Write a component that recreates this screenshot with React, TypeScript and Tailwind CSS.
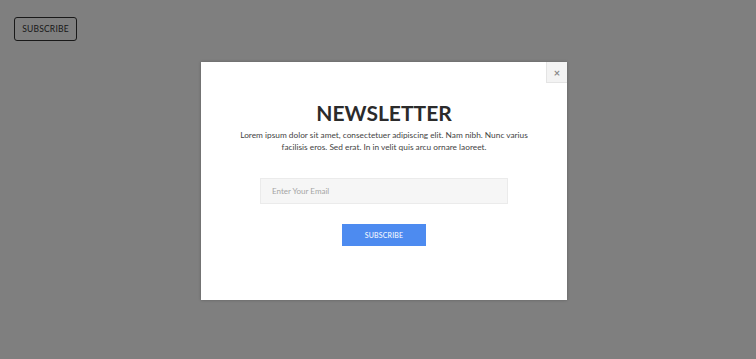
const font = { fontFamily: "Lato, 'Open Sans', sans-serif" };

const App = () => {
  return (
    <div className="relative h-[359px] w-[756px] overflow-hidden bg-white" style={font}>
      <div className="p-[14px]">
        <button className="h-6 w-[63px] rounded-[3px] border border-[#333] text-[8.5px] tracking-[0.2px] text-[#333]">
          SUBSCRIBE
        </button>
      </div>

      <div className="absolute inset-0 flex items-start justify-center bg-black/50 pt-[62px]">
        <div className="relative ml-[12px] h-[238px] w-[366px] bg-white shadow-[0_0_3px_rgba(0,0,0,0.25)]">
          <button className="absolute right-0 top-0 flex h-[21px] w-[21px] items-center justify-center border-b border-l border-[#e4e4e4] bg-[#f3f3f3] text-[11px] font-bold leading-none text-[#8a8a8a]">
            ×
          </button>
          <div className="flex flex-col items-center px-8 pt-[40px]">
            <h2 className="text-[21px] font-bold leading-none text-[#2b2b2b]">NEWSLETTER</h2>
            <p className="mt-[6px] w-[300px] text-center text-[8.3px] leading-[12px] text-[#444]">
              Lorem ipsum dolor sit amet, consectetuer adipiscing elit. Nam nibh. Nunc varius facilisis eros. Sed erat. In in velit quis arcu ornare laoreet.
            </p>
            <input
              className="mt-[25px] h-[26px] w-[248px] border border-[#ebebeb] bg-[#f6f6f6] px-[11px] text-[8px] text-[#333] outline-none placeholder:text-[#a5a5a5]"
              placeholder="Enter Your Email"
            />
            <button className="mt-5 h-[22px] w-[84px] bg-[#4d8bf0] text-[7px] tracking-[0.2px] text-white">SUBSCRIBE</button>
          </div>
        </div>
      </div>
    </div>
  );
};

export default App;
